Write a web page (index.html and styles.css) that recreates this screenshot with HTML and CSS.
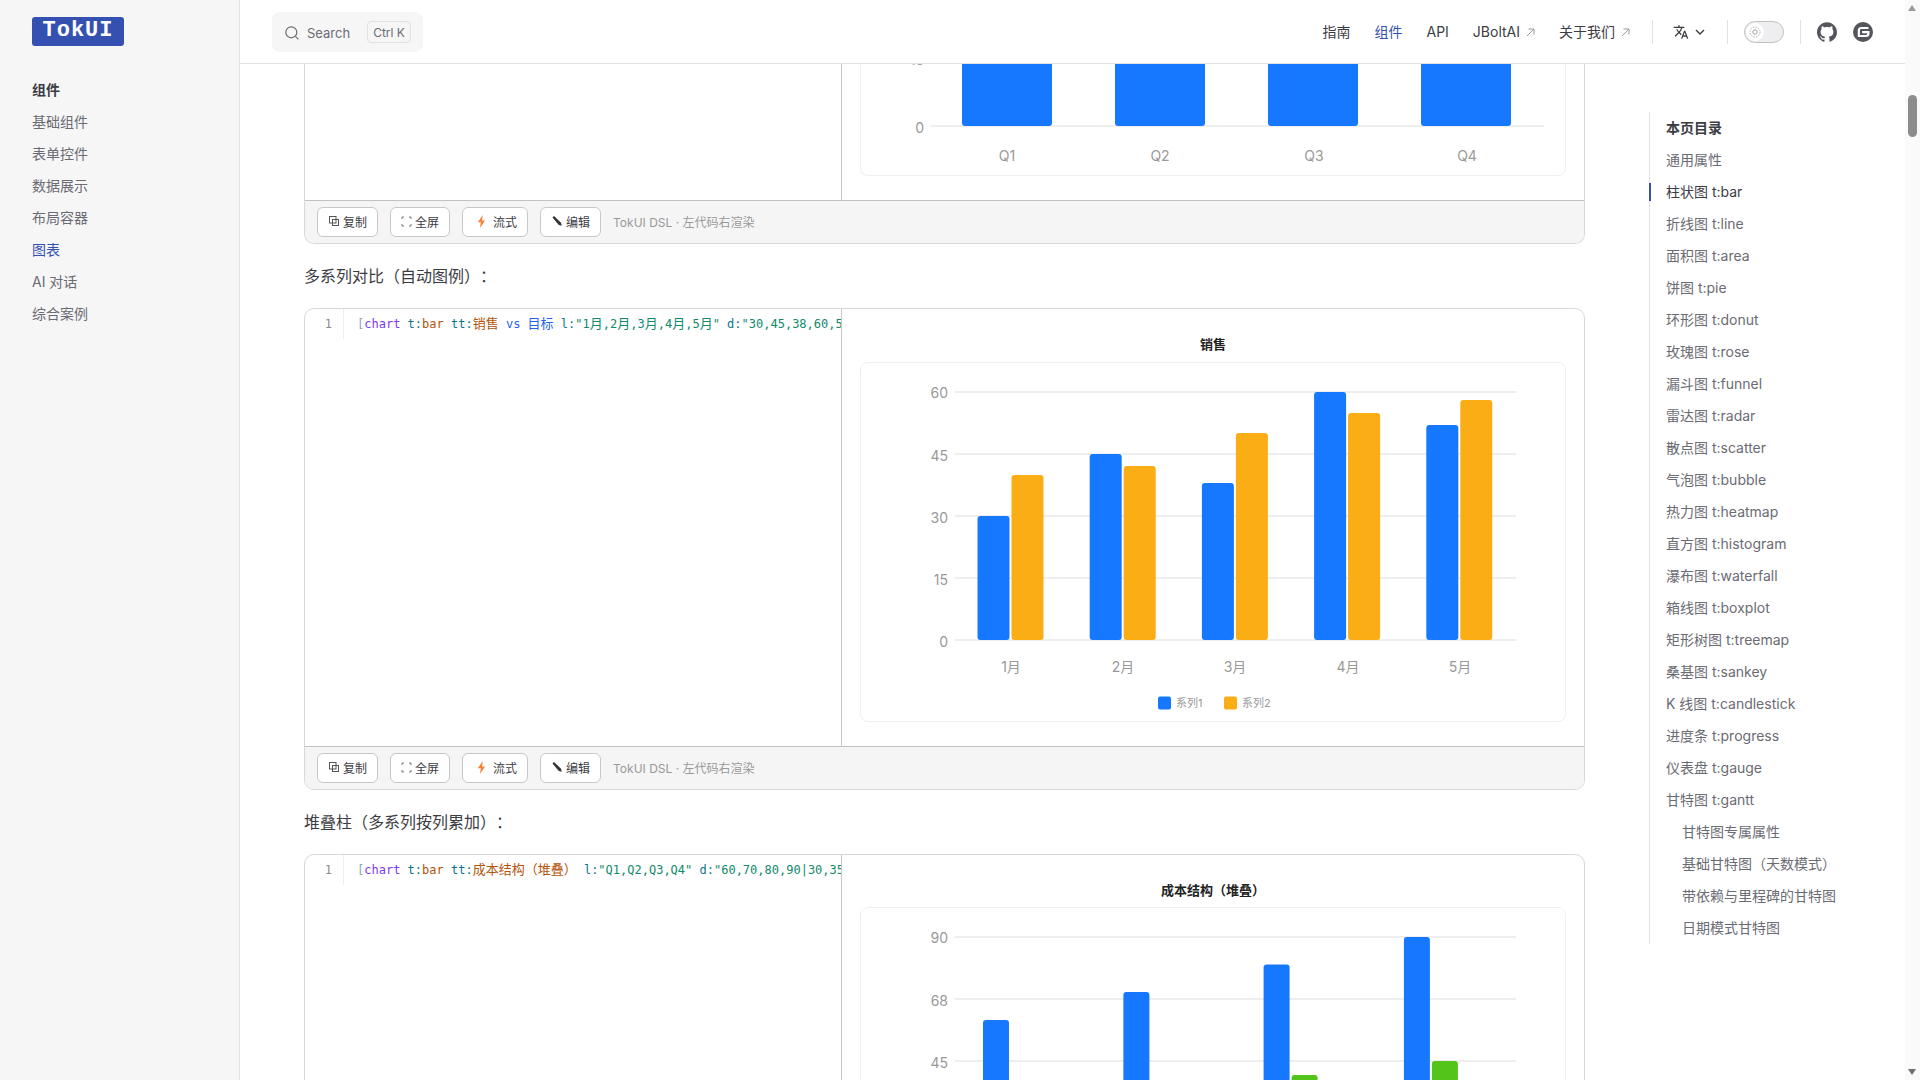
FILE: index.html
```html
<!DOCTYPE html>
<html lang="zh-CN">
<head>
  <meta charset="UTF-8">
  <title>TokUI 图表</title>
  <link rel="stylesheet" href="styles.css">
</head>
<body>
<div class="page">

  <aside class="sidebar">
    <div class="logo">TokUI</div>
    <nav class="side-nav">
      <a class="side-title">组件</a>
      <a>基础组件</a>
      <a>表单控件</a>
      <a>数据展示</a>
      <a>布局容器</a>
      <a class="active">图表</a>
      <a>AI 对话</a>
      <a>综合案例</a>
    </nav>
  </aside>

  <div class="main">
    <header class="topbar">
      <div class="search">
        <svg class="search-icon" width="14" height="14" viewBox="0 0 14 14" fill="none" stroke="#6b6b73" stroke-width="1.2"><circle cx="6.3" cy="6.3" r="5.5"/><path d="M10.4 10.4L13.4 13.4"/></svg>
        <span class="search-text">Search</span>
        <span class="kbd">Ctrl K</span>
      </div>
      <div class="topnav">
        <a class="nav-link">指南</a>
        <a class="nav-link active">组件</a>
        <a class="nav-link">API</a>
        <a class="nav-link">JBoltAI<svg class="out" width="9" height="9" viewBox="0 0 9 9" fill="none" stroke="#9a9a9f"><path d="M1 8L8 1M2.5 1H8V6.5"/></svg></a>
        <a class="nav-link nav-end">关于我们<svg class="out" width="9" height="9" viewBox="0 0 9 9" fill="none" stroke="#9a9a9f"><path d="M1 8L8 1M2.5 1H8V6.5"/></svg></a>
        <span class="divider"></span>
        <span class="lang">
          <svg width="16" height="16" viewBox="0 0 24 24" fill="#3c3c43"><path d="M12.87 15.07l-2.54-2.51.03-.03c1.74-1.94 2.98-4.17 3.71-6.53H17V4h-7V2H8v2H1v1.99h11.17C11.5 7.92 10.44 9.75 9 11.35 8.07 10.32 7.3 9.19 6.69 8h-2c.73 1.63 1.73 3.17 2.98 4.56l-5.09 5.02L4 19l5-5 3.11 3.11.76-2.04zM18.5 10h-2L12 22h2l1.12-3h4.75L21 22h2l-4.5-12zm-2.62 7l1.62-4.33L19.12 17h-3.24z"/></svg>
          <svg width="10" height="6" viewBox="0 0 10 6" fill="none" stroke="#3c3c43" stroke-width="1.4"><path d="M1 1l4 4 4-4"/></svg>
        </span>
        <span class="divider"></span>
        <span class="toggle"><span class="knob"><svg width="12" height="12" viewBox="0 0 12 12" fill="none" stroke="#a0a0a6"><circle cx="6" cy="6" r="2.2"/><circle cx="6" cy="6" r="5" stroke-dasharray="1.2 1.4"/></svg></span></span>
        <span class="divider"></span>
        <svg class="social" width="20" height="20" viewBox="0 0 24 24" fill="#55555c"><path d="M12 .297c-6.63 0-12 5.373-12 12 0 5.303 3.438 9.8 8.205 11.385.6.113.82-.258.82-.577 0-.285-.01-1.04-.015-2.04-3.338.724-4.042-1.61-4.042-1.61C4.422 18.07 3.633 17.7 3.633 17.7c-1.087-.744.084-.729.084-.729 1.205.084 1.838 1.236 1.838 1.236 1.07 1.835 2.809 1.305 3.495.998.108-.776.417-1.305.76-1.605-2.665-.3-5.466-1.332-5.466-5.93 0-1.31.465-2.38 1.235-3.22-.135-.303-.54-1.523.105-3.176 0 0 1.005-.322 3.3 1.23.96-.267 1.98-.399 3-.405 1.02.006 2.04.138 3 .405 2.28-1.552 3.285-1.23 3.285-1.23.645 1.653.24 2.873.12 3.176.765.84 1.23 1.91 1.23 3.22 0 4.61-2.805 5.625-5.475 5.92.42.36.81 1.096.81 2.22 0 1.606-.015 2.896-.015 3.286 0 .315.21.69.825.57C20.565 22.092 24 17.592 24 12.297c0-6.627-5.373-12-12-12"/></svg>
        <svg class="social" width="20" height="20" viewBox="0 0 24 24"><circle cx="12" cy="12" r="12" fill="#55555c"/><path d="M18.5 7.2H10a3 3 0 0 0-3 3v6.6h8.5a3 3 0 0 0 3-3v-1.6h-7.5" fill="none" stroke="#fff" stroke-width="2.6"/></svg>
      </div>
    </header>

    <div class="content">
      <div class="doc">

        <section class="card card-cut">
          <div class="card-body">
            <div class="code"></div>
            <div class="preview">
              <div class="chart-box">
                <svg class="chart" width="704" height="111" viewBox="0 0 704 111">
                  <line class="grid" x1="70" y1="62" x2="683" y2="62"/>
                  <g class="s1">
                    <rect x="101" y="-10" width="90" height="72" rx="3"/>
                    <rect x="254" y="-10" width="90" height="72" rx="3"/>
                    <rect x="407" y="-10" width="90" height="72" rx="3"/>
                    <rect x="560" y="-10" width="90" height="72" rx="3"/>
                  </g>
                  <g class="tick">
                    <text x="63" y="1">15</text>
                    <text x="63" y="69">0</text>
                  </g>
                  <g class="cat">
                    <text x="146" y="97">Q1</text>
                    <text x="299" y="97">Q2</text>
                    <text x="453" y="97">Q3</text>
                    <text x="606" y="97">Q4</text>
                  </g>
                </svg>
              </div>
            </div>
          </div>
          <div class="toolbar">
            <button class="btn"><svg class="ic-12" viewBox="0 0 12 12" fill="none" stroke="#555"><rect x="1.5" y="1.5" width="6.5" height="6.5"/><rect x="4.5" y="4.5" width="6" height="6"/></svg>复制</button>
            <button class="btn"><svg class="ic-11" viewBox="0 0 11 11" fill="none" stroke="#777"><path d="M1 3V1h2M8 1h2v2M10 8v2H8M3 10H1V8"/></svg>全屏</button>
            <button class="btn"><svg class="ic-17" viewBox="0 0 17 13" fill="#f97f32"><path d="M9.8 0L4.8 7.2h3L7 13l5-7.6H9z"/></svg>流式</button>
            <button class="btn"><svg class="ic-12" viewBox="0 0 12 12"><path d="M1.5 2.5L3 1l7 6.8.8 3-3-.8z" fill="#333"/></svg>编辑</button>
            <span class="tool-note">TokUI DSL · 左代码右渲染</span>
          </div>
        </section>

        <h3 class="sub-head">多系列对比（自动图例）：</h3>

        <section class="card">
          <div class="card-body">
            <div class="code">
              <span class="gutter">1</span>
              <pre class="line"><span class="t-br">[</span><span class="t-tag">chart</span> <span class="t-key">t:</span><span class="t-val">bar</span> <span class="t-key">tt:</span><span class="t-val zh">销售</span> <span class="t-blue">vs <span class="zh">目标</span></span> <span class="t-key">l:</span><span class="t-str">"1<span class="zh">月</span>,2<span class="zh">月</span>,3<span class="zh">月</span>,4<span class="zh">月</span>,5<span class="zh">月</span>"</span> <span class="t-key">d:</span><span class="t-str">"30,45,38,60,52|40,42,50,55,58"</span><span class="t-br">]</span></pre>
            </div>
            <div class="preview">
              <div class="chart-title">销售</div>
              <div class="chart-box">
                <svg class="chart" width="704" height="358" viewBox="0 0 704 358">
                  <g>
                    <line class="grid" x1="94" y1="29" x2="655" y2="29"/>
                    <line class="grid" x1="94" y1="91" x2="655" y2="91"/>
                    <line class="grid" x1="94" y1="153" x2="655" y2="153"/>
                    <line class="grid" x1="94" y1="215" x2="655" y2="215"/>
                    <line class="grid" x1="94" y1="277" x2="655" y2="277"/>
                  </g>
                  <g class="s1">
                    <rect x="116.5" y="153" width="32" height="124" rx="3"/>
                    <rect x="228.7" y="91" width="32" height="186" rx="3"/>
                    <rect x="340.9" y="120" width="32" height="157" rx="3"/>
                    <rect x="453.1" y="29" width="32" height="248" rx="3"/>
                    <rect x="565.3" y="62" width="32" height="215" rx="3"/>
                  </g>
                  <g class="s2">
                    <rect x="150.5" y="112" width="32" height="165" rx="3"/>
                    <rect x="262.7" y="103" width="32" height="174" rx="3"/>
                    <rect x="374.9" y="70" width="32" height="207" rx="3"/>
                    <rect x="487.1" y="50" width="32" height="227" rx="3"/>
                    <rect x="599.3" y="37" width="32" height="240" rx="3"/>
                  </g>
                  <g class="tick">
                    <text x="87" y="35">60</text>
                    <text x="87" y="98">45</text>
                    <text x="87" y="160">30</text>
                    <text x="87" y="222">15</text>
                    <text x="87" y="284">0</text>
                  </g>
                  <g class="cat">
                    <text x="150" y="309">1月</text>
                    <text x="262" y="309">2月</text>
                    <text x="374" y="309">3月</text>
                    <text x="487" y="309">4月</text>
                    <text x="599" y="309">5月</text>
                  </g>
                  <rect class="s1" x="297" y="333.5" width="13" height="13" rx="2"/>
                  <text class="legend" x="315" y="343.5">系列1</text>
                  <rect class="s2" x="363" y="333.5" width="13" height="13" rx="2"/>
                  <text class="legend" x="381" y="343.5">系列2</text>
                </svg>
              </div>
            </div>
          </div>
          <div class="toolbar">
            <button class="btn"><svg class="ic-12" viewBox="0 0 12 12" fill="none" stroke="#555"><rect x="1.5" y="1.5" width="6.5" height="6.5"/><rect x="4.5" y="4.5" width="6" height="6"/></svg>复制</button>
            <button class="btn"><svg class="ic-11" viewBox="0 0 11 11" fill="none" stroke="#777"><path d="M1 3V1h2M8 1h2v2M10 8v2H8M3 10H1V8"/></svg>全屏</button>
            <button class="btn"><svg class="ic-17" viewBox="0 0 17 13" fill="#f97f32"><path d="M9.8 0L4.8 7.2h3L7 13l5-7.6H9z"/></svg>流式</button>
            <button class="btn"><svg class="ic-12" viewBox="0 0 12 12"><path d="M1.5 2.5L3 1l7 6.8.8 3-3-.8z" fill="#333"/></svg>编辑</button>
            <span class="tool-note">TokUI DSL · 左代码右渲染</span>
          </div>
        </section>

        <h3 class="sub-head">堆叠柱（多系列按列累加）：</h3>

        <section class="card">
          <div class="card-body">
            <div class="code">
              <span class="gutter">1</span>
              <pre class="line"><span class="t-br">[</span><span class="t-tag">chart</span> <span class="t-key">t:</span><span class="t-val">bar</span> <span class="t-key">tt:</span><span class="t-val zh">成本结构（堆叠）</span> <span class="t-key">l:</span><span class="t-str">"Q1,Q2,Q3,Q4"</span> <span class="t-key">d:</span><span class="t-str">"60,70,80,90|30,35,40,45"</span><span class="t-br">]</span></pre>
            </div>
            <div class="preview">
              <div class="chart-title tight">成本结构（堆叠）</div>
              <div class="chart-box">
                <svg class="chart" width="704" height="358" viewBox="0 0 704 358">
                  <g>
                    <line class="grid" x1="94" y1="29" x2="655" y2="29"/>
                    <line class="grid" x1="94" y1="91" x2="655" y2="91"/>
                    <line class="grid" x1="94" y1="153" x2="655" y2="153"/>
                    <line class="grid" x1="94" y1="215" x2="655" y2="215"/>
                    <line class="grid" x1="94" y1="277" x2="655" y2="277"/>
                  </g>
                  <g class="s1">
                    <rect x="122" y="112" width="26" height="165" rx="3"/>
                    <rect x="262.4" y="84" width="26" height="193" rx="3"/>
                    <rect x="402.6" y="56.6" width="26" height="220.4" rx="3"/>
                    <rect x="542.9" y="29" width="26" height="248" rx="3"/>
                  </g>
                  <g class="s3">
                    <rect x="150" y="194" width="26" height="83" rx="3"/>
                    <rect x="290.4" y="181" width="26" height="96" rx="3"/>
                    <rect x="430.6" y="167" width="26" height="110" rx="3"/>
                    <rect x="570.9" y="153" width="26" height="124" rx="3"/>
                  </g>
                  <g class="tick">
                    <text x="87" y="35">90</text>
                    <text x="87" y="98">68</text>
                    <text x="87" y="160">45</text>
                    <text x="87" y="222">23</text>
                    <text x="87" y="284">0</text>
                  </g>
                </svg>
              </div>
            </div>
          </div>
        </section>

      </div>

      <nav class="toc">
        <a class="toc-title">本页目录</a>
        <a>通用属性</a>
        <a class="current">柱状图 t:bar</a>
        <a>折线图 t:line</a>
        <a>面积图 t:area</a>
        <a>饼图 t:pie</a>
        <a>环形图 t:donut</a>
        <a>玫瑰图 t:rose</a>
        <a>漏斗图 t:funnel</a>
        <a>雷达图 t:radar</a>
        <a>散点图 t:scatter</a>
        <a>气泡图 t:bubble</a>
        <a>热力图 t:heatmap</a>
        <a>直方图 t:histogram</a>
        <a>瀑布图 t:waterfall</a>
        <a>箱线图 t:boxplot</a>
        <a>矩形树图 t:treemap</a>
        <a>桑基图 t:sankey</a>
        <a>K 线图 t:candlestick</a>
        <a>进度条 t:progress</a>
        <a>仪表盘 t:gauge</a>
        <a>甘特图 t:gantt</a>
        <a class="nested">甘特图专属属性</a>
        <a class="nested">基础甘特图（天数模式）</a>
        <a class="nested">带依赖与里程碑的甘特图</a>
        <a class="nested">日期模式甘特图</a>
      </nav>
    </div>
  </div>

  <div class="scrollbar">
    <span class="arrow-up"></span>
    <span class="thumb"></span>
    <span class="arrow-down"></span>
  </div>

</div>
</body>
</html>
```
FILE: styles.css
```css
* {
  box-sizing: border-box;
}
html, body {
  margin: 0;
  height: 100%;
  overflow: hidden;
}
body {
  font-family: Inter, "Noto Sans CJK SC", sans-serif;
  font-size: 14px;
  color: #3c3c43;
  background: #fff;
  text-spacing-trim: space-all;
}
.page {
  display: flex;
  height: 100vh;
}

/* left sidebar */
.sidebar {
  width: 240px;
  flex: none;
  padding: 17px 32px 0;
  background: #f6f6f7;
  border-right: 1px solid #e2e2e3;
}
.logo {
  width: 92px;
  height: 29px;
  background: #3451b2;
  border-radius: 3px;
  color: #fff;
  font-family: "Liberation Mono", monospace;
  font-weight: bold;
  font-size: 22px;
  line-height: 28px;
  letter-spacing: 1px;
  text-align: center;
}
.side-nav {
  margin-top: 28px;
}
.side-nav a {
  display: block;
  height: 32px;
  line-height: 32px;
  color: #6b6b73;
}
.side-nav .side-title {
  color: #3c3c43;
  font-weight: 700;
}
.side-nav .active {
  color: #3451b2;
}

/* top bar */
.main {
  flex: 1;
  min-width: 0;
  display: flex;
  flex-direction: column;
}
.topbar {
  height: 64px;
  flex: none;
  display: flex;
  align-items: center;
  justify-content: space-between;
  padding: 0 32px;
  background: #fff;
  border-bottom: 1px solid #e2e2e3;
}
.search {
  width: 151px;
  height: 40px;
  display: flex;
  align-items: center;
  padding: 2px 12px 0 13px;
  background: #f6f6f7;
  border-radius: 8px;
  color: #6b6b73;
  font-size: 13px;
}
.search-text {
  margin-left: 8px;
}
.kbd {
  margin-left: auto;
  width: 44px;
  height: 22px;
  margin-top: -2px;
  line-height: 21px;
  text-align: center;
  font-size: 12px;
  border: 1px solid #e2e2e3;
  border-radius: 4px;
}
.topnav {
  display: flex;
  align-items: center;
}
.nav-link {
  margin-right: 24px;
  margin-top: -1px;
  white-space: nowrap;
}
.nav-link.active {
  color: #3451b2;
}
.nav-end {
  margin-right: 22px;
}
.out {
  margin-left: 6px;
}
.divider {
  width: 1px;
  height: 24px;
  background: #e2e2e3;
}
.lang {
  display: flex;
  align-items: center;
  gap: 6px;
  margin: 0 22px 0 20px;
}
.toggle {
  width: 40px;
  height: 22px;
  margin: 0 16px;
  padding: 1px;
  border: 1px solid #c2c2c4;
  border-radius: 11px;
  background: #eeeef0;
}
.knob {
  width: 18px;
  height: 18px;
  display: flex;
  align-items: center;
  justify-content: center;
  border-radius: 50%;
  background: #fff;
}
.social {
  margin-left: 16px;
}

/* page content */
.content {
  flex: 1;
  min-height: 0;
  display: flex;
  overflow: hidden;
}
.doc {
  width: 1281px;
  flex: none;
  margin-left: 64px;
}
.card {
  border: 1px solid #d8d8da;
  border-radius: 10px;
  overflow: hidden;
}
.card-cut {
  border-top: none;
  border-radius: 0 0 10px 10px;
}
.card-body {
  display: flex;
  height: 437px;
}
.card-cut .card-body {
  height: 136px;
}
.code {
  width: 537px;
  flex: none;
  display: flex;
  align-items: flex-start;
  border-right: 1px solid #c8c8ca;
  overflow: hidden;
}
.gutter {
  width: 39px;
  height: 30px;
  flex: none;
  padding-right: 11px;
  line-height: 30px;
  text-align: right;
  font-family: "DejaVu Sans Mono", monospace;
  font-size: 12px;
  color: #8a8a90;
  border-right: 1px solid #eeeeef;
}
.line {
  margin: 0 0 0 13px;
  line-height: 30px;
  font-family: "DejaVu Sans Mono", "Noto Sans CJK SC", monospace;
  font-size: 12px;
  white-space: pre;
}
.zh {
  font-size: 13px;
}
.t-br {
  color: #94a3b8;
}
.t-tag {
  color: #7c3aed;
}
.t-key {
  color: #0e7490;
}
.t-val {
  color: #b45309;
}
.t-str {
  color: #0f8a6a;
}
.t-blue {
  color: #2563eb;
}
.preview {
  flex: 1;
  min-width: 0;
  padding: 0 18px;
}
.chart-title {
  height: 53px;
  padding-top: 26px;
  line-height: 18px;
  text-align: center;
  font-size: 13px;
  font-weight: 700;
  color: #222;
}
.chart-title.tight {
  height: 52px;
}
.chart-box {
  height: 360px;
  border: 1px solid #f0f0f0;
  border-radius: 8px;
}
.card-cut .chart-box {
  height: 112px;
  border-top: none;
  border-radius: 0 0 8px 8px;
}
.chart {
  display: block;
  overflow: hidden;
}
.chart text {
  font-family: Inter, "Noto Sans CJK SC", sans-serif;
}
.grid {
  stroke: #eeeeee;
  stroke-width: 2;
}
.s1 {
  fill: #1677ff;
}
.s2 {
  fill: #faad14;
}
.s3 {
  fill: #52c41a;
}
.tick text {
  font-size: 14px;
  fill: #999;
  text-anchor: end;
}
.cat text {
  font-size: 14px;
  fill: #999;
  text-anchor: middle;
}
.legend {
  font-size: 11px;
  fill: #999;
}

/* toolbar under each card */
.toolbar {
  height: 43px;
  display: flex;
  align-items: center;
  gap: 12px;
  padding: 0 12px;
  background: #f5f5f5;
  border-top: 1px solid #c2c2c4;
}
.btn {
  height: 30px;
  display: flex;
  align-items: center;
  gap: 3px;
  padding: 0 10px 2px;
  background: #fff;
  border: 1px solid #c8c8ca;
  border-radius: 6px;
  font-family: inherit;
  font-size: 12px;
  color: #3c3c43;
}
.ic-12 {
  width: 12px;
  height: 12px;
}
.ic-11 {
  width: 11px;
  height: 11px;
}
.ic-17 {
  width: 17px;
  height: 13px;
}
.tool-note {
  margin-bottom: 2px;
  font-size: 12px;
  color: #999;
}
.sub-head {
  height: 64px;
  margin: 0;
  padding-top: 20px;
  line-height: 24px;
  font-size: 16px;
  font-weight: 400;
  color: #3c3c43;
}

/* right toc */
.toc {
  width: 240px;
  height: 832px;
  flex: none;
  margin: 48px 0 0 64px;
  padding-left: 16px;
  border-left: 1px solid #e2e2e3;
  position: relative;
}
.toc a {
  display: block;
  height: 32px;
  line-height: 32px;
  color: #6b6b73;
  white-space: nowrap;
}
.toc .toc-title {
  color: #3c3c43;
  font-weight: 700;
}
.toc .current {
  color: #3c3c43;
}
.toc .current::before {
  content: "";
  position: absolute;
  left: -1px;
  top: 71px;
  width: 2px;
  height: 18px;
  background: #3451b2;
}
.toc .nested {
  padding-left: 16px;
}

/* page scrollbar */
.scrollbar {
  width: 15px;
  flex: none;
  position: relative;
  background: #fafafa;
}
.thumb {
  position: absolute;
  left: 3px;
  top: 95px;
  width: 9px;
  height: 42px;
  border-radius: 5px;
  background: #8c8c8c;
}
.arrow-up,
.arrow-down {
  position: absolute;
  left: 3px;
  width: 0;
  height: 0;
  border-left: 4.5px solid transparent;
  border-right: 4.5px solid transparent;
}
.arrow-up {
  top: 5px;
  border-bottom: 6px solid #9a9a9a;
}
.arrow-down {
  bottom: 5px;
  border-top: 6px solid #6e6e6e;
}
```
